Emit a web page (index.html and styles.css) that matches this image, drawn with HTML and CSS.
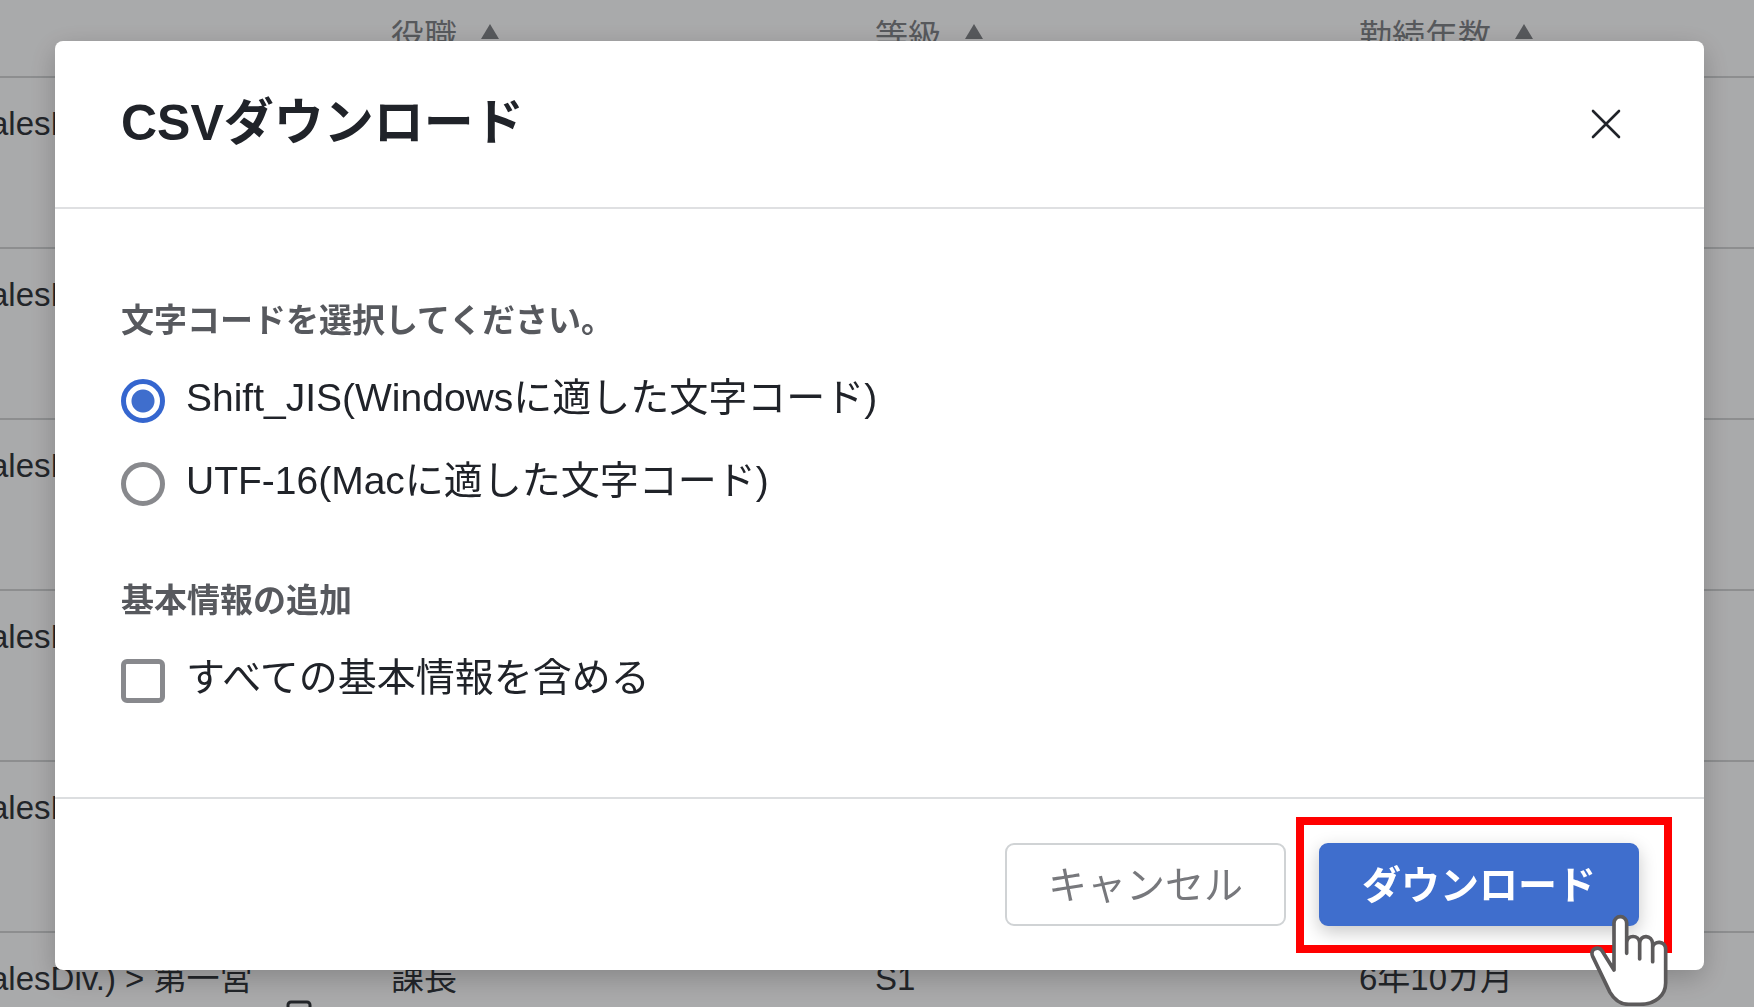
FILE: index.html
```html
<!DOCTYPE html>
<html lang="ja">
<head>
  <meta charset="UTF-8">
  <meta name="viewport" content="width=device-width, initial-scale=1.0">
  <title>CSVダウンロード</title>
  <link rel="stylesheet" href="styles.css">
</head>
<body>

  <main class="page">
    <table class="list">
      <thead>
        <tr>
          <th class="col-dept"></th>
          <th>役職<span class="sort"></span></th>
          <th>等級<span class="sort"></span></th>
          <th>勤続年数<span class="sort"></span></th>
        </tr>
      </thead>
      <tbody>
        <tr><td>SalesDiv.)</td><td></td><td></td><td></td></tr>
        <tr><td>SalesDiv.)</td><td></td><td></td><td></td></tr>
        <tr><td>SalesDiv.)</td><td></td><td></td><td></td></tr>
        <tr><td>SalesDiv.)</td><td></td><td></td><td></td></tr>
        <tr><td>SalesDiv.)</td><td></td><td></td><td></td></tr>
        <tr>
          <td>
            SalesDiv.) &gt; 第一営
            <svg class="copy-icon" viewBox="0 0 26 30" aria-hidden="true">
              <rect x="2" y="2" width="22" height="26" rx="3" fill="none" stroke="currentColor" stroke-width="3"/>
            </svg>
          </td>
          <td>課長</td>
          <td>S1</td>
          <td>6年10カ月</td>
        </tr>
      </tbody>
    </table>
  </main>

  <div class="overlay">
    <form class="modal" role="dialog" aria-labelledby="modalTitle">
      <header class="modal-header">
        <h1 id="modalTitle">CSVダウンロード</h1>
        <button type="button" class="close" aria-label="閉じる">
          <svg viewBox="0 0 30 30" aria-hidden="true">
            <path d="M2 2L28 28M28 2L2 28" stroke="currentColor" stroke-width="2.6" stroke-linecap="round"/>
          </svg>
        </button>
      </header>

      <div class="modal-body">
        <fieldset>
          <legend>文字コードを選択してください。</legend>
          <div class="option">
            <input type="radio" id="sjis" name="encoding" checked>
            <label for="sjis">Shift_JIS(Windowsに適した文字コード)</label>
          </div>
          <div class="option">
            <input type="radio" id="utf16" name="encoding">
            <label for="utf16">UTF-16(Macに適した文字コード)</label>
          </div>
        </fieldset>

        <fieldset>
          <legend>基本情報の追加</legend>
          <div class="option">
            <input type="checkbox" id="allInfo" name="allInfo">
            <label for="allInfo">すべての基本情報を含める</label>
          </div>
        </fieldset>
      </div>

      <footer class="modal-footer">
        <button type="button" class="btn btn-cancel">キャンセル</button>
        <div class="highlight">
          <button type="button" class="btn btn-download">ダウンロード</button>
          <svg class="hand" viewBox="84 75 252 276" aria-hidden="true">
            <path d="M162 243V102A19 19 0 0 1 200 102V193V162C200 136 238 136 239 162V210V162C240 136 277 136 278 165V218V176C280 154 318 154 317 182V282C317 320 285 346 240 346H206C184 346 164 334 150 310L98 202C88 179 116 170 126 185Z" fill="#fff" stroke="#5c5a5b" stroke-width="11" stroke-linejoin="round"/>
          </svg>
        </div>
      </footer>
    </form>
  </div>

</body>
</html>
```
FILE: styles.css
```css
* {
  box-sizing: border-box;
}

body {
  margin: 0;
  font-family: "Liberation Sans", "Noto Sans CJK JP", sans-serif;
  color: #202329;
  background-color: #fdfeff;
}

.page {
  height: 100vh;
  overflow: hidden;
}

/* List behind the dialog, scrolled sideways */
.list {
  width: calc(100% + 121px);
  margin-left: -32px;
  table-layout: fixed;
  border-collapse: separate;
  border-spacing: 0;
  font-size: 33px;
  line-height: 48px;
}

.list th,
.list td {
  padding: 22px 0 0;
  border-bottom: 2px solid #d2d4d6;
  text-align: left;
  vertical-align: top;
  white-space: nowrap;
}

.list th {
  height: 78px;
  padding-top: 13px;
  font-weight: normal;
  color: #82858a;
}

.list td {
  height: 171px;
  color: #34383e;
}

.list .col-dept {
  width: 423px;
}

.sort {
  display: inline-block;
  margin-left: 24px;
  border: 9px solid transparent;
  border-top: 0;
  border-bottom: 15px solid #82858a;
  vertical-align: 9px;
}

.copy-icon {
  display: block;
  width: 26px;
  height: 30px;
  margin: -3px 0 0 318px;
}

.overlay {
  position: fixed;
  inset: 0;
  padding: 41px 50px 36px 55px;
  background-color: rgba(0, 0, 0, 0.33);
  overflow: hidden;
}

.modal {
  border-radius: 8px;
  background-color: #fff;
  box-shadow: 0 8px 28px rgba(0, 0, 0, 0.22);
}

.modal-header {
  display: flex;
  align-items: center;
  justify-content: space-between;
  height: 168px;
  padding: 0 66px;
  border-bottom: 2px solid #dfe0e2;
}

.modal-header h1 {
  margin: 0;
  padding-bottom: 2px;
  font-size: 50px;
  line-height: 72px;
}

.close {
  display: flex;
  align-items: center;
  justify-content: center;
  width: 64px;
  height: 64px;
  padding: 0;
  border: none;
  background: none;
  color: #202329;
  cursor: pointer;
}

.close svg {
  width: 30px;
  height: 30px;
}

.modal-body {
  padding: 88px 66px 94px;
}

fieldset {
  margin: 0;
  padding: 0;
  border: none;
}

fieldset + fieldset {
  margin-top: 71px;
}

legend {
  padding: 0;
  margin-bottom: 34px;
  font-size: 33px;
  font-weight: bold;
  line-height: 48px;
  color: #57595e;
}

.option {
  display: flex;
  gap: 21px;
  height: 44px;
  font-size: 39px;
  line-height: 38px;
}

.option + .option {
  margin-top: 39px;
}

.option input {
  appearance: none;
  flex: none;
  width: 44px;
  height: 44px;
  margin: 0;
  border: 5px solid #88898d;
  background-color: #fff;
}

.option input[type="radio"] {
  border-radius: 50%;
}

.option input[type="radio"]:checked {
  border-color: #3566cf;
  background: radial-gradient(circle, #3f6ecd 11px, #fff 12px);
}

.option input[type="checkbox"] {
  border-radius: 6px;
}

.modal-footer {
  display: flex;
  justify-content: flex-end;
  gap: 33px;
  padding: 44px 65px 44px 66px;
  border-top: 2px solid #dcdee0;
}

.btn {
  height: 83px;
  padding: 0 41px 6px;
  border: 2px solid #d0d3d5;
  border-radius: 9px;
  background-color: #fff;
  font-family: inherit;
  font-size: 39px;
  color: #77787c;
  cursor: pointer;
}

.btn-download {
  border-color: #3f6ecd;
  background-color: #3f6ecd;
  box-shadow: 0 6px 18px rgba(0, 0, 0, 0.22);
  font-weight: bold;
  color: #fff;
}

/* Red frame and pointer drawn over the download button */
.highlight {
  position: relative;
}

.highlight::after {
  content: "";
  position: absolute;
  inset: -26px -33px -27px -23px;
  border: 8px solid #f00;
  pointer-events: none;
}

.hand {
  position: absolute;
  z-index: 1;
  right: -33px;
  bottom: -80px;
  width: 84px;
  height: 92px;
  pointer-events: none;
}
```
